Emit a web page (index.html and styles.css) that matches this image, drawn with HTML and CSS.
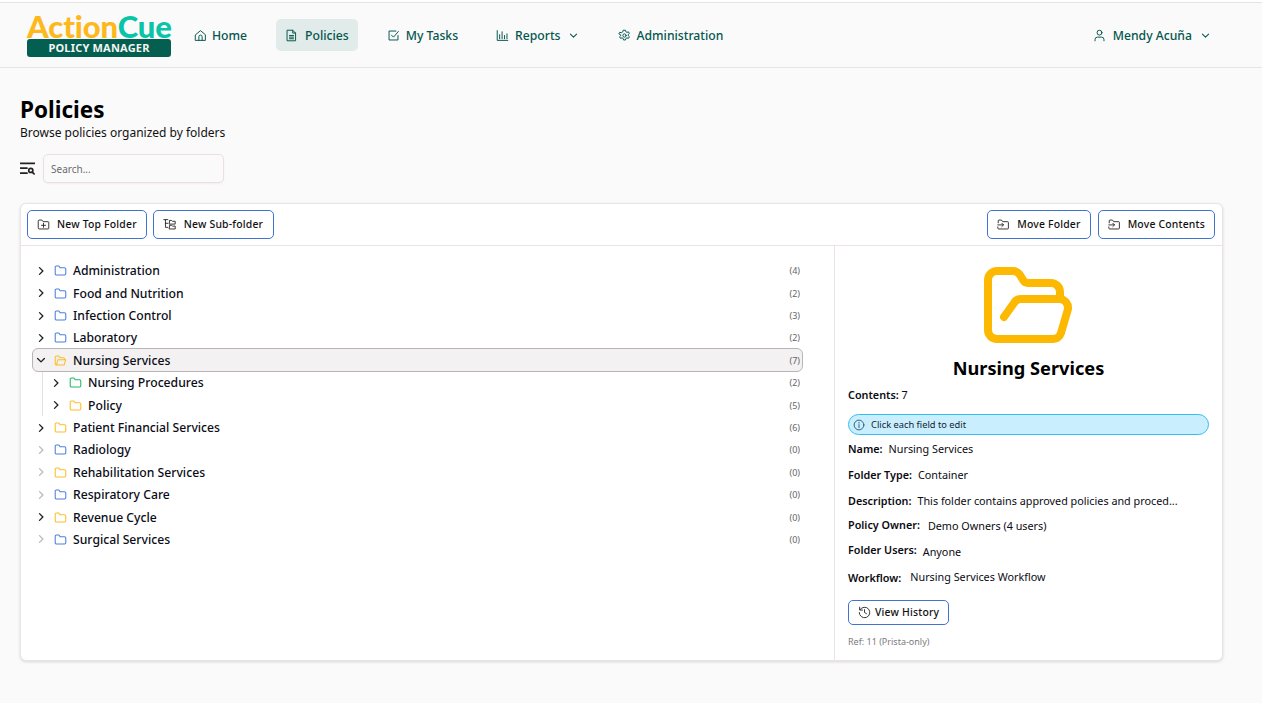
FILE: index.html
```html
<!DOCTYPE html>
<html lang="en">
<head>
    <meta charset="UTF-8">
    <title>Policies</title>
    <link rel="stylesheet" href="styles.css">
</head>
<body>
    <svg class="icon-defs" width="0" height="0">
        <defs>
            <symbol id="folder" viewBox="0 0 16 16"><path d="M1.500 4a1.500 1.500 0 0 1 1.500-1.500h3l1.500 2h5.500a1.500 1.500 0 0 1 1.500 1.500v6a1.500 1.500 0 0 1-1.500 1.500H3A1.500 1.500 0 0 1 1.500 12z"/></symbol>
            <symbol id="folder-open" viewBox="0 0 16 16"><path d="M3 13.500h9.500l2-6.500H5l-2 6.500a1.500 1.500 0 0 1-1.500-1.500V4A1.500 1.500 0 0 1 3 2.500h3l1.500 2h4a1.500 1.500 0 0 1 1.500 1.500v1"/></symbol>
            <symbol id="chev-right" viewBox="0 0 16 16"><path d="M6 3.500l4.500 4.500L6 12.500"/></symbol>
            <symbol id="chev-down" viewBox="0 0 16 16"><path d="M3.500 6L8 10.500 12.500 6"/></symbol>
            <symbol id="folder-move" viewBox="0 0 16 16"><path d="M1.500 6V3.500a1 1 0 0 1 1-1h3l1.500 2h6a1 1 0 0 1 1 1v7a1 1 0 0 1-1 1h-11a1 1 0 0 1-1-1V11M1 8.500h7M6 6.500l2 2-2 2"/></symbol>
        </defs>
    </svg>

    <header class="topbar">
        <div class="logo">
            <div class="logo-name"><span class="logo-action">Action</span><span class="logo-cue">Cue</span></div>
            <div class="logo-tag">POLICY MANAGER</div>
        </div>
        <nav class="nav">
            <a class="nav-item nav-home">
                <svg class="nav-icon" viewBox="0 0 16 16"><path d="M2 7l6-5 6 5v7H2zM6 14V9.500a2 2 0 0 1 4 0V14"/></svg>
                Home
            </a>
            <a class="nav-item nav-policies active">
                <svg class="nav-icon" viewBox="0 0 16 16"><path d="M3 1.500h6.500L13 5v9.500H3zM9.500 1.500V5H13M5.500 8h5M5.500 10h5M5.500 12h5"/></svg>
                Policies
            </a>
            <a class="nav-item nav-tasks">
                <svg class="nav-icon" viewBox="0 0 16 16"><path d="M13.500 8v5.500h-11v-11H11M5.500 7.500L8 10l6-7"/></svg>
                My Tasks
            </a>
            <a class="nav-item nav-reports">
                <svg class="nav-icon" viewBox="0 0 16 16"><path d="M1.500 2v12h13M4.500 12V7M7.500 12V3.500M10.500 12V8M13.500 12V6"/></svg>
                Reports
                <svg class="nav-chev"><use href="#chev-down"/></svg>
            </a>
            <a class="nav-item nav-admin">
                <svg class="nav-icon" viewBox="0 0 16 16"><circle cx="8" cy="8" r="2"/><path d="M6.800 1.500h2.400l.4 1.800 1.400.8 1.800-.6 1.200 2-1.400 1.300v1.400l1.400 1.300-1.200 2-1.800-.6-1.400.8-.4 1.800H6.800l-.4-1.800-1.400-.8-1.800.6-1.200-2 1.400-1.300V7.300L1 6l1.200-2 1.800.6 1.400-.8z"/></svg>
                Administration
            </a>
        </nav>
        <a class="nav-item user-menu">
            <svg class="nav-icon" viewBox="0 0 16 16"><circle cx="8" cy="4.500" r="3"/><path d="M2.500 14.500V13a3 3 0 0 1 3-3h5a3 3 0 0 1 3 3v1.500"/></svg>
            Mendy Acuña
            <svg class="nav-chev"><use href="#chev-down"/></svg>
        </a>
    </header>

    <main class="page">
        <h1>Policies</h1>
        <p class="subtitle">Browse policies organized by folders</p>

        <div class="search-row">
            <svg class="search-icon" viewBox="0 0 16 16"><path class="thick" d="M.5 2.500h15M.5 7.500h7M.5 13h7"/><circle class="thick" cx="11.500" cy="10" r="2.200"/><path class="thick" d="M13 11.800l2 2"/></svg>
            <input class="search-input" type="text" placeholder="Search...">
        </div>

        <section class="card">
            <div class="card-toolbar">
                <div class="btn-group">
                    <button class="btn">
                        <svg class="btn-icon" viewBox="0 0 16 16"><path d="M1.500 3.500a1 1 0 0 1 1-1h3.500l1.500 2h6a1 1 0 0 1 1 1v7a1 1 0 0 1-1 1h-11a1 1 0 0 1-1-1zM8 6.500v5M5.500 9h5"/></svg>
                        New Top Folder
                    </button>
                    <button class="btn btn-sub">
                        <svg class="btn-icon" viewBox="0 0 16 16"><path d="M1 2h5M3 2v9.500h3M3 6.500h3M8 4.500V3h2.500l1 1H15v3.500H8zM8 10.500V9h2.500l1 1H15v3.500H8z"/></svg>
                        New Sub-folder
                    </button>
                </div>
                <div class="btn-group move-group">
                    <button class="btn"><svg class="btn-icon"><use href="#folder-move"/></svg>Move Folder</button>
                    <button class="btn"><svg class="btn-icon"><use href="#folder-move"/></svg>Move Contents</button>
                </div>
            </div>

            <div class="card-body">
                <div class="tree">
                    <div class="tree-row"><svg class="chev"><use href="#chev-right"/></svg><svg class="folder blue"><use href="#folder"/></svg><span class="tree-name">Administration</span><span class="count">(4)</span></div>
                    <div class="tree-row"><svg class="chev"><use href="#chev-right"/></svg><svg class="folder blue"><use href="#folder"/></svg><span class="tree-name">Food and Nutrition</span><span class="count">(2)</span></div>
                    <div class="tree-row"><svg class="chev"><use href="#chev-right"/></svg><svg class="folder blue"><use href="#folder"/></svg><span class="tree-name">Infection Control</span><span class="count">(3)</span></div>
                    <div class="tree-row"><svg class="chev"><use href="#chev-right"/></svg><svg class="folder blue"><use href="#folder"/></svg><span class="tree-name">Laboratory</span><span class="count">(2)</span></div>
                    <div class="tree-row selected"><svg class="chev"><use href="#chev-down"/></svg><svg class="folder yellow"><use href="#folder-open"/></svg><span class="tree-name">Nursing Services</span><span class="count">(7)</span></div>
                    <div class="tree-children">
                        <div class="tree-row"><svg class="chev"><use href="#chev-right"/></svg><svg class="folder green"><use href="#folder"/></svg><span class="tree-name">Nursing Procedures</span><span class="count">(2)</span></div>
                        <div class="tree-row"><svg class="chev"><use href="#chev-right"/></svg><svg class="folder yellow"><use href="#folder"/></svg><span class="tree-name">Policy</span><span class="count">(5)</span></div>
                    </div>
                    <div class="tree-row"><svg class="chev"><use href="#chev-right"/></svg><svg class="folder yellow"><use href="#folder"/></svg><span class="tree-name">Patient Financial Services</span><span class="count">(6)</span></div>
                    <div class="tree-row"><svg class="chev empty"><use href="#chev-right"/></svg><svg class="folder blue"><use href="#folder"/></svg><span class="tree-name">Radiology</span><span class="count">(0)</span></div>
                    <div class="tree-row"><svg class="chev empty"><use href="#chev-right"/></svg><svg class="folder yellow"><use href="#folder"/></svg><span class="tree-name">Rehabilitation Services</span><span class="count">(0)</span></div>
                    <div class="tree-row"><svg class="chev empty"><use href="#chev-right"/></svg><svg class="folder blue"><use href="#folder"/></svg><span class="tree-name">Respiratory Care</span><span class="count">(0)</span></div>
                    <div class="tree-row"><svg class="chev"><use href="#chev-right"/></svg><svg class="folder yellow"><use href="#folder"/></svg><span class="tree-name">Revenue Cycle</span><span class="count">(0)</span></div>
                    <div class="tree-row"><svg class="chev empty"><use href="#chev-right"/></svg><svg class="folder blue"><use href="#folder"/></svg><span class="tree-name">Surgical Services</span><span class="count">(0)</span></div>
                </div>

                <aside class="details">
                    <svg class="big-folder" viewBox="0 0 90 78"><path d="M76 32v-7a9 9 0 0 0-9-9H44a6 6 0 0 1-5-3l-3-5a9 9 0 0 0-7-4H13a9 9 0 0 0-9 9v50a9 9 0 0 0 9 9h56a9 9 0 0 0 8-6l7-24a9 9 0 0 0-8-10H37a8 8 0 0 0-7 4l-10 14"/></svg>
                    <h2>Nursing Services</h2>
                    <div class="contents"><b>Contents:</b> 7</div>
                    <div class="hint">
                        <svg class="hint-icon" viewBox="0 0 16 16"><circle cx="8" cy="8" r="6.500"/><path d="M8 7.500v4M8 4.500v1"/></svg>
                        Click each field to edit
                    </div>
                    <div class="field f-name"><b>Name:</b><span>Nursing Services</span></div>
                    <div class="field f-type"><b>Folder Type:</b><span>Container</span></div>
                    <div class="field f-desc"><b>Description:</b><span>This folder contains approved policies and proced...</span></div>
                    <div class="field f-owner"><b>Policy Owner:</b><span>Demo Owners (4 users)</span></div>
                    <div class="field f-users"><b>Folder Users:</b><span>Anyone</span></div>
                    <div class="field f-flow"><b>Workflow:</b><span>Nursing Services Workflow</span></div>
                    <button class="btn btn-history">
                        <svg class="btn-icon" viewBox="0 0 16 16"><path d="M2.500 4.500A6.500 6.500 0 1 1 1.500 8M2 1.500v3.500h3.500M8 4.500V8l2.500 1.500"/></svg>
                        View History
                    </button>
                    <div class="ref">Ref: 11 (Prista-only)</div>
                </aside>
            </div>
        </section>
    </main>
</body>
</html>
```
FILE: styles.css
```css
* {
    box-sizing: border-box;
}
body {
    margin: 0;
    height: 703px;
    overflow: hidden;
    background-color: #fafafa;
    font-family: "Noto Sans", "Open Sans", sans-serif;
    color: #0b0b12;
    border-top: 2px solid #fff;
}
svg {
    fill: none;
    stroke: currentColor;
    stroke-linecap: round;
    stroke-linejoin: round;
}
.icon-defs {
    position: absolute;
}

/* top bar */
.topbar {
    display: flex;
    align-items: center;
    height: 66px;
    padding: 0 42px 0 27px;
    border-top: 1px solid #e6e2e4;
    border-bottom: 1px solid #e9e1e4;
}
.logo {
    width: 144px;
    flex: none;
}
.logo-name {
    font-family: "Lato", sans-serif;
    font-weight: 900;
    font-size: 31px;
    line-height: 26px;
    letter-spacing: -0.1px;
    white-space: nowrap;
}
.logo-action {
    color: #fdb81e;
}
.logo-cue {
    color: #0ac4a8;
}
.logo-tag {
    height: 18px;
    background-color: #045f50;
    border-radius: 3px;
    color: #f4f4f4;
    font-size: 11px;
    font-weight: 700;
    line-height: 18px;
    letter-spacing: 0.2px;
    text-align: center;
}
.nav {
    display: flex;
    align-items: center;
    flex: 1;
    margin-left: 14px;
}
.nav-item {
    display: flex;
    align-items: center;
    height: 32px;
    padding: 0 9px;
    gap: 6px;
    border-radius: 5px;
    color: #05564f;
    font-size: 12.2px;
    font-weight: 500;
    white-space: nowrap;
}
.nav-icon {
    width: 13px;
    height: 13px;
    stroke-width: 1.200;
}
.nav-chev {
    width: 11px;
    height: 11px;
    margin-left: 1px;
    stroke-width: 1.500;
}
.nav-home {
    margin-right: 20px;
    gap: 5px;
}
.nav-policies {
    margin-right: 20px;
    background-color: #e1ebe9;
    gap: 7px;
}
.nav-tasks {
    margin-right: 20px;
}
.nav-reports {
    margin-right: 21px;
}
.user-menu {
    gap: 7px;
}

/* page head */
.page {
    padding: 0 39px 0 20px;
}
h1 {
    margin: 26px 0 0;
    font-size: 22.5px;
    font-weight: 700;
    line-height: 31px;
    color: #000;
}
.subtitle {
    margin: 0;
    font-size: 12px;
    line-height: 16px;
    color: #111;
}
.search-row {
    display: flex;
    align-items: center;
    gap: 8px;
    margin-top: 13px;
}
.search-icon {
    width: 15px;
    height: 15px;
    flex: none;
    color: #222;
}
.thick {
    stroke-width: 1.800;
}
.search-input {
    width: 181px;
    height: 29px;
    padding: 0 7px;
    border: 1px solid #ecdfe3;
    border-radius: 5px;
    background-color: #fafafa;
    box-shadow: 0 1px 2px rgba(0, 0, 0, 0.05);
    font-family: inherit;
    font-size: 10px;
}
.search-input::placeholder {
    color: #6b6b70;
}

/* card */
.card {
    height: 458px;
    margin-top: 20px;
    background-color: #fff;
    border: 1px solid #ece3e5;
    border-radius: 6px;
    box-shadow: 0 1px 3px rgba(0, 0, 0, 0.14);
    display: flex;
    flex-direction: column;
}
.card-toolbar {
    display: flex;
    justify-content: space-between;
    height: 42px;
    padding: 6px 7px 0 6px;
    border-bottom: 1px solid #ece3e5;
}
.btn-group {
    display: flex;
    gap: 6px;
}
.move-group {
    gap: 7px;
}
.btn {
    display: flex;
    align-items: center;
    gap: 7px;
    height: 29px;
    padding: 0 9px 1px;
    background-color: #fff;
    border: 1px solid #3f74cf;
    border-radius: 5px;
    font-family: inherit;
    font-size: 10.4px;
    font-weight: 500;
    letter-spacing: 0.2px;
    color: #111;
}
.btn-sub {
    gap: 8px;
    padding-right: 10px;
}
.btn-icon {
    width: 13px;
    height: 13px;
    stroke-width: 1.100;
    color: #222;
}
.card-body {
    display: flex;
    flex: 1;
}

/* folder tree */
.tree {
    flex: 1;
    padding: 13.6px 31px 0 11px;
}
.tree-row {
    display: flex;
    align-items: center;
    height: 22.400px;
    padding-left: 3px;
    font-size: 12.2px;
    font-weight: 500;
    color: #0b0d18;
    white-space: nowrap;
}
.chev {
    width: 12px;
    height: 12px;
    margin-right: 7px;
    stroke-width: 1.800;
    color: #222;
}
.chev.empty {
    color: #bbb;
}
.folder {
    width: 13px;
    height: 13px;
    margin-right: 6px;
    stroke-width: 1.300;
}
.blue {
    color: #4a80e0;
}
.yellow {
    color: #fbbf24;
}
.green {
    color: #22b866;
}
.tree-name {
    flex: 1;
}
.count {
    font-size: 9px;
    font-weight: 400;
    color: #666;
    margin-right: 3px;
}
.selected {
    height: 24px;
    margin: -1px 0 -0.600px;
    background-color: #f3f1f2;
    border: 1px solid #b9b4b5;
    border-radius: 6px;
    padding-left: 2px;
}
.selected .count {
    margin-right: 2px;
}
.tree-children {
    margin-left: 10px;
    padding-left: 4px;
    border-left: 1px solid #e4dfe0;
}

/* right side details */
.details {
    width: 388px;
    flex: none;
    display: flex;
    flex-direction: column;
    padding: 21px 13px 0;
    border-left: 1px solid #ece3e5;
}
.big-folder {
    width: 90px;
    height: 78px;
    align-self: center;
    color: #fdb902;
    stroke-width: 8;
}
h2 {
    margin: 10px 0 0;
    font-size: 18.2px;
    font-weight: 700;
    line-height: 26px;
    text-align: center;
    color: #000;
}
.contents {
    margin-top: 6px;
    font-size: 10.8px;
    line-height: 16px;
}
.contents b, .field b {
    font-weight: 600;
}
.hint {
    display: flex;
    align-items: center;
    gap: 6px;
    height: 21px;
    margin-top: 11px;
    padding-left: 4px;
    background-color: #c9effe;
    border: 1px solid #35bdf0;
    border-radius: 11px;
    font-size: 9.3px;
    color: #123;
}
.hint-icon {
    width: 12px;
    height: 12px;
    stroke-width: 1.200;
    color: #22507a;
}
.field {
    display: flex;
    gap: 6px;
    height: 16px;
    font-size: 10.8px;
    line-height: 16px;
    white-space: nowrap;
}
.f-name {
    margin-top: 6px;
}
.f-type, .f-desc {
    margin-top: 10px;
}
.f-owner {
    margin-top: 8px;
    gap: 8px;
}
.f-owner span {
    padding-top: 1px;
}
.f-users {
    margin-top: 9px;
}
.f-users span {
    padding-top: 2px;
}
.f-flow {
    margin-top: 11px;
    gap: 9px;
}
.f-flow b {
    padding-top: 1px;
}
.btn-history {
    align-self: flex-start;
    gap: 4px;
    height: 25px;
    margin-top: 15px;
}
.ref {
    margin-top: 11px;
    font-size: 9px;
    line-height: 12px;
    color: #7b7b80;
}
```
